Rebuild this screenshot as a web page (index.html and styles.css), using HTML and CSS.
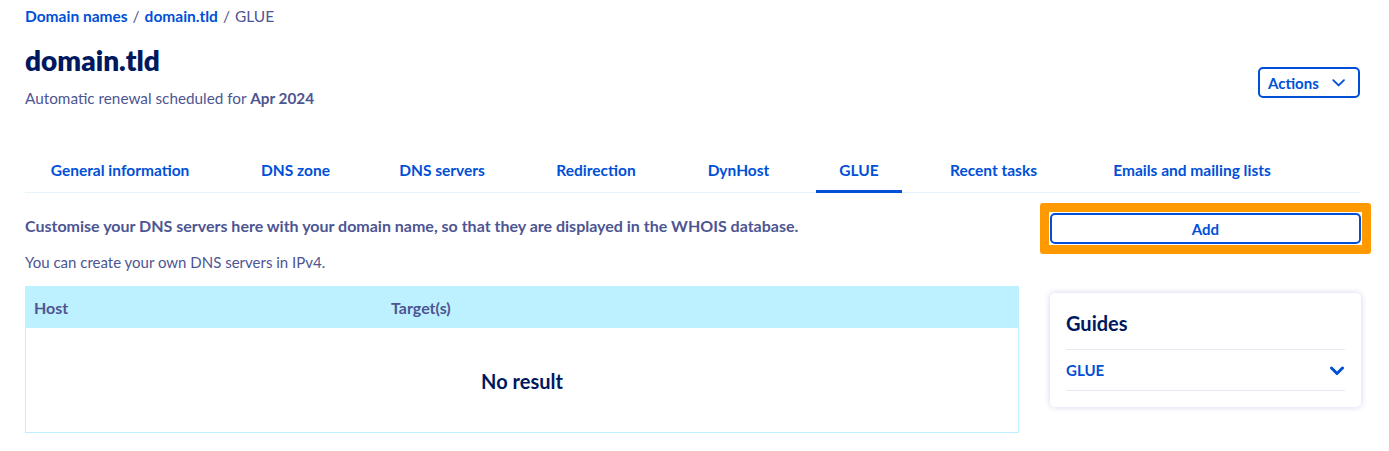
FILE: index.html
```html
<!DOCTYPE html>
<html lang="en">
<head>
<meta charset="utf-8">
<title>domain.tld - GLUE</title>
<link rel="stylesheet" href="styles.css">
</head>
<body>
<div class="page">
  <nav class="breadcrumb">
    <a class="crumb" href="#">Domain names</a><span class="sep">/</span>
    <a class="crumb" href="#">domain.tld</a><span class="sep">/</span>
    <span class="current">GLUE</span>
  </nav>

  <header class="header">
    <div class="header-text">
      <h1 class="title">domain.tld</h1>
      <p class="subtitle">Automatic renewal scheduled for <strong>Apr 2024</strong></p>
    </div>
    <button class="actions-btn" type="button">
      <span>Actions</span>
      <svg class="actions-chev" width="16" height="10" viewBox="0 0 16 10" aria-hidden="true"><path d="M1.5 1.5 L8 8 L14.5 1.5" fill="none" stroke="#0050d7" stroke-width="2.2" stroke-linecap="round" stroke-linejoin="round"/></svg>
    </button>
  </header>

  <div class="tabs">
    <a class="tab t1" href="#">General information</a>
    <a class="tab t2" href="#">DNS zone</a>
    <a class="tab t3" href="#">DNS servers</a>
    <a class="tab t4" href="#">Redirection</a>
    <a class="tab t5" href="#">DynHost</a>
    <a class="tab t6 active" href="#">GLUE</a>
    <a class="tab t7" href="#">Recent tasks</a>
    <a class="tab t8" href="#">Emails and mailing lists</a>
  </div>

  <div class="content">
    <main class="main">
      <p class="lead">Customise your DNS servers here with your domain name, so that they are displayed in the WHOIS database.</p>
      <p class="note">You can create your own DNS servers in IPv4.</p>
      <div class="table">
        <div class="thead">
          <div class="th">Host</div>
          <div class="th">Target(s)</div>
        </div>
        <div class="tbody">
          <div class="empty">No result</div>
        </div>
      </div>
    </main>
    <aside class="side">
      <div class="highlight">
        <button class="add-btn" type="button">Add</button>
      </div>
      <div class="guides">
        <h2 class="guides-title">Guides</h2>
        <div class="guide-row">
          <span class="guide-name">GLUE</span>
          <svg class="guide-chev" width="14" height="10" viewBox="0 0 14 10" aria-hidden="true"><path d="M1.5 2 L7 7.5 L12.5 2" fill="none" stroke="#0050d7" stroke-width="3" stroke-linecap="round" stroke-linejoin="round"/></svg>
        </div>
      </div>
    </aside>
  </div>
</div>
</body>
</html>
```

FILE: styles.css
```css
* { box-sizing: border-box; }

html, body {
  margin: 0;
  padding: 0;
  background: #ffffff;
}

body {
  font-family: "Lato", "Open Sans", "Liberation Sans", sans-serif;
  color: #4d5592;
  font-size: 15px;
}

.page {
  padding: 7px 29px 0 25px;
}

.breadcrumb {
  display: flex;
  align-items: center;
  font-size: 15.5px;
  line-height: 18px;
}

.crumb {
  color: #0050d7;
  font-weight: 700;
  text-decoration: none;
}

.sep {
  color: #4d5592;
  margin: 0 5px 0 5px;
}

.current {
  color: #4d5592;
}

.header {
  display: flex;
  align-items: flex-start;
  justify-content: space-between;
  margin-top: 18px;
}

.title {
  margin: 0;
  font-size: 28px;
  line-height: 34px;
  font-weight: 800;
  color: #00185e;
}

.subtitle {
  margin: 12px 0 0;
  font-size: 15.3px;
  line-height: 18px;
}

.subtitle strong {
  font-weight: 700;
}

.actions-btn {
  display: flex;
  align-items: center;
  gap: 13px;
  height: 31px;
  width: 102px;
  padding: 0 13px 0 8px;
  margin-top: 24px;
  border: 2px solid #0050d7;
  border-radius: 5px;
  background: #ffffff;
  color: #0050d7;
  font-family: inherit;
  font-size: 15px;
  font-weight: 700;
}

.tabs {
  display: flex;
  gap: 23px;
  margin-top: 47px;
  border-bottom: 1px solid #e3f4fc;
}

.tab {
  display: block;
  flex: none;
  padding: 7px 0 11px;
  font-size: 15.5px;
  line-height: 18px;
  font-weight: 700;
  color: #0050d7;
  text-decoration: none;
  text-align: center;
  white-space: nowrap;
  border-bottom: 3px solid transparent;
  margin-bottom: -1px;
}

.t1 { width: 190px; }
.t2 { width: 115px; }
.t3 { width: 132px; }
.t4 { width: 130px; }
.t5 { width: 109px; }
.t6 { width: 86px; }
.t7 { width: 137px; }
.t8 { width: 214px; }

.tab.active {
  border-bottom-color: #0050d7;
}

.content {
  display: flex;
  gap: 31px;
  padding-top: 10px;
}

.main {
  flex: 0 0 994px;
  padding-top: 11px;
}

.lead {
  margin: 0;
  padding-top: 3px;
  font-size: 16px;
  line-height: 18px;
  font-weight: 700;
}

.note {
  margin: 18px 0 0;
  font-size: 15px;
  line-height: 18px;
}

.table {
  margin-top: 15px;
  border: 1px solid #bef1ff;
}

.thead {
  display: grid;
  grid-template-columns: 357px 1fr;
  height: 41px;
  align-items: center;
  background: #bef1ff;
  padding-left: 8px;
}

.th {
  font-weight: 700;
  font-size: 16px;
  color: #4d5592;
}

.tbody {
  height: 104px;
  display: flex;
  align-items: center;
  justify-content: center;
}

.empty {
  font-size: 20px;
  font-weight: 700;
  color: #00185e;
  margin-top: 1px;
}

.side {
  flex: 0 0 310px;
}

.highlight {
  margin: 0 -10px;
  border: 9px solid #ff9900;
  border-radius: 3px;
  padding: 1px;
  background: #ffffff;
}

.add-btn {
  display: block;
  width: 100%;
  height: 31px;
  border: 2px solid #0050d7;
  border-radius: 5px;
  background: #ffffff;
  color: #0050d7;
  font-family: inherit;
  font-size: 15px;
  font-weight: 700;
}

.guides {
  margin-top: 39px;
  width: 311px;
  background: #ffffff;
  border-radius: 5px;
  box-shadow: 0 0 6px rgba(0, 14, 156, 0.18);
  padding: 17px 16px 16px;
}

.guides-title {
  margin: 0;
  font-size: 20px;
  line-height: 26px;
  font-weight: 700;
  color: #00185e;
  padding-bottom: 13px;
  border-bottom: 1px solid #e6e8f2;
}

.guide-row {
  display: flex;
  align-items: center;
  justify-content: space-between;
  height: 41px;
  border-bottom: 1px solid #e6e8f2;
}

.guide-name {
  font-size: 15px;
  font-weight: 700;
  color: #0050d7;
}

.guide-chev {
  margin-right: 1px;
  margin-top: 1px;
}
```
